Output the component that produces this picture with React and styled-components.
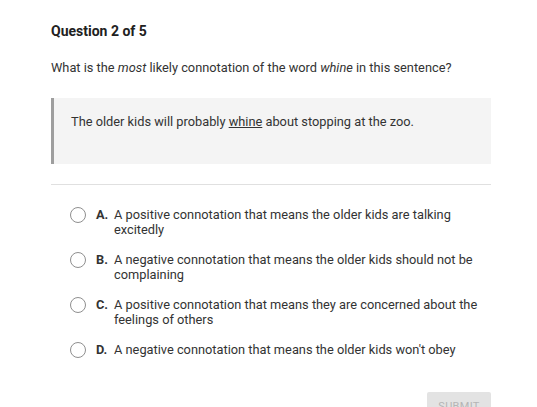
import React from "react";
import styled, { createGlobalStyle } from "styled-components";

const Global = createGlobalStyle`
  body {
    margin: 0;
    background: #fff;
    font-family: Roboto, "Liberation Sans", sans-serif;
    color: #333;
  }
`;

const Page = styled.div`
  width: 440px;
  padding: 22px 0 0 51px;
  height: 385px;
  overflow: hidden;
`;
const Title = styled.h2`
  margin: 0;
  font-size: 14px;
  font-weight: 700;
  color: #212121;
  line-height: 18px;
`;
const Prompt = styled.p`
  margin: 19px 0 0;
  font-size: 12.8px;
  line-height: 18px;
  color: #333;
`;
const Passage = styled.blockquote`
  margin: 21px 0 0;
  height: 66px;
  box-sizing: border-box;
  padding: 15px 17px;
  background: #f4f4f4;
  border-left: 3px solid #9e9e9e;
  font-size: 12.8px;
  line-height: 18px;
  color: #333;
`;
const Underlined = styled.span`
  text-decoration: underline;
`;
const Divider = styled.hr`
  margin: 20px 0 0;
  border: none;
  border-top: 1px solid #e0e0e0;
`;
const Options = styled.ul`
  list-style: none;
  margin: 22px 0 0;
  padding: 0 0 0 19px;
  display: flex;
  flex-direction: column;
  gap: 15px;
`;
const Option = styled.li`
  display: flex;
  align-items: flex-start;
  font-size: 12.8px;
  line-height: 15px;
  color: #333;
`;
const Radio = styled.span`
  flex: none;
  width: 16px;
  height: 16px;
  margin-top: 0;
  border: 1px solid #8f8f8f;
  border-radius: 50%;
  box-sizing: border-box;
  margin-right: 10px;
`;
const Letter = styled.span`
  flex: none;
  width: 18px;
  font-weight: 700;
  color: #333;
`;
const Answer = styled.span`
  flex: 1;
  padding-right: 10px;
`;
const Footer = styled.div`
  display: flex;
  justify-content: flex-end;
  margin-top: 34px;
`;
const Submit = styled.button`
  width: 64px;
  height: 28px;
  border: none;
  border-radius: 2px;
  background: #e3e3e3;
  color: #b5b5b5;
  font-family: Roboto, "Liberation Sans", sans-serif;
  font-size: 11px;
  text-transform: uppercase;
  letter-spacing: 0.3px;
`;

const answers = [
  ["A.", "A positive connotation that means the older kids are talking excitedly"],
  ["B.", "A negative connotation that means the older kids should not be complaining"],
  ["C.", "A positive connotation that means they are concerned about the feelings of others"],
  ["D.", "A negative connotation that means the older kids won't obey"],
];

export default function App() {
  return (
    <Page>
      <Global />
      <Title>Question 2 of 5</Title>
      <Prompt>
        What is the <em>most</em> likely connotation of the word <em>whine</em> in this sentence?
      </Prompt>
      <Passage>
        The older kids will probably <Underlined>whine</Underlined> about stopping at the zoo.
      </Passage>
      <Divider />
      <Options>
        {answers.map(([letter, text]) => (
          <Option key={letter}>
            <Radio />
            <Letter>{letter}</Letter>
            <Answer>{text}</Answer>
          </Option>
        ))}
      </Options>
      <Footer>
        <Submit disabled>Submit</Submit>
      </Footer>
    </Page>
  );
}
